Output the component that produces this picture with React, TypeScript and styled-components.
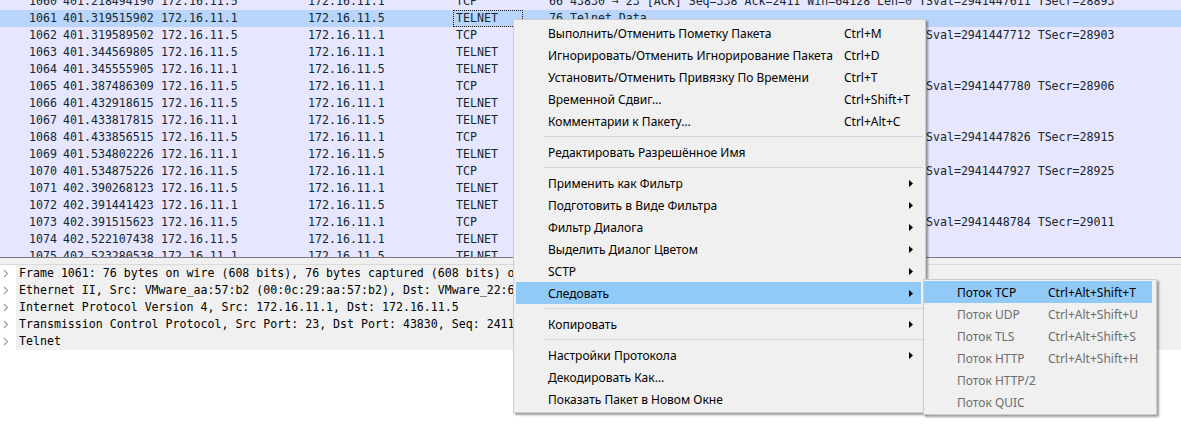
import React from 'react';
import styled, { createGlobalStyle } from 'styled-components';

const Global = createGlobalStyle`
  html, body { margin: 0; padding: 0; background: #ffffff; }
  body { width: 1181px; height: 430px; overflow: hidden; }
  #root { width: 1181px; height: 430px; }
`;

const Window = styled.div`
  position: relative;
  width: 1181px;
  height: 430px;
  overflow: hidden;
  background: #ffffff;
  display: flex;
  flex-direction: column;
  font-family: "DejaVu Sans Mono", "Liberation Mono", monospace;
  font-size: 11.6px;
`;

const PacketList = styled.div`
  flex: none;
  height: 257px;
  overflow: hidden;
  background: #e7e6ff;
  border-bottom: 1px solid #7a7a7a;
`;

const Rows = styled.div`
  display: flex;
  flex-direction: column;
  margin-top: -7px;
`;

const Row = styled.div<{ $selected?: boolean }>`
  display: grid;
  grid-template-columns: 60px 98px 147px 148px 70px 43px 1fr;
  height: 17px;
  line-height: 17px;
  color: #12272e;
  white-space: nowrap;
  background: ${(p) => (p.$selected ? '#bad5fc' : 'transparent')};
`;

const Cell = styled.div<{ $right?: boolean; $focus?: boolean }>`
  padding: 0 3px;
  overflow: hidden;
  text-align: ${(p) => (p.$right ? 'right' : 'left')};
  ${(p) => (p.$focus ? 'outline: 1px dotted #1a1a1a; outline-offset: -1px;' : '')}
`;

const InfoCell = styled.div`
  padding-left: 4px;
  overflow: hidden;
`;

const Splitter = styled.div`
  flex: none;
  height: 6px;
  background: #f0f0f0;
  border-bottom: 1px solid #dadada;
`;

const Details = styled.div`
  flex: 1;
  display: flex;
  flex-direction: column;
  background: #ffffff;
`;

const TreeRow = styled.div`
  display: flex;
  height: 17px;
  line-height: 17px;
  color: #000000;
  white-space: nowrap;
`;

const Expander = styled.div`
  flex: none;
  width: 16px;
  display: flex;
  align-items: center;
  padding-left: 3px;
  box-sizing: border-box;
`;

const TreeText = styled.div`
  flex: 1;
  padding-left: 3px;
  background: #f0f0f0;
  overflow: hidden;
`;

const MenuBox = styled.div`
  position: absolute;
  box-sizing: border-box;
  background: #f0f0f0;
  border: 1px solid #cccccc;
  box-shadow: 2px 2px 2px rgba(0, 0, 0, 0.38);
  font-family: "Noto Sans", "Open Sans", sans-serif;
  font-size: 12px;
  color: #000000;
  display: flex;
  flex-direction: column;
`;

const MainMenu = styled(MenuBox)`
  left: 513px;
  top: 19px;
  width: 413px;
  padding: 2px 4px 2px 2px;
`;

const SubMenu = styled(MenuBox)`
  left: 923px;
  top: 279px;
  width: 234px;
  padding: 1px 4px 1px 0;
`;

const MenuItem = styled.div<{ $active?: boolean; $disabled?: boolean }>`
  display: grid;
  grid-template-columns: 296px 1fr 20px;
  align-items: center;
  height: 22px;
  padding-left: 32px;
  white-space: nowrap;
  background: ${(p) => (p.$active ? '#91c9f7' : 'transparent')};
  color: ${(p) => (p.$disabled ? '#6d6d6d' : '#000000')};
`;

const SubItem = styled(MenuItem)`
  grid-template-columns: 91px 1fr;
  padding-left: 33px;
`;

const Shortcut = styled.span``;

const ArrowCell = styled.span`
  display: flex;
  justify-content: center;
  align-items: center;
`;

const Separator = styled.div`
  height: 1px;
  margin: 4px -2px 4px 27px;
  background: #d5d5d5;
`;

type Pkt = {
  no: number;
  time: string;
  src: string;
  dst: string;
  proto: string;
  len: number;
  info: string;
};

const A = '172.16.11.1';
const B = '172.16.11.5';
const ack = (seq: number, a: number, tsv: string, tse: string) =>
  `43830 → 23 [ACK] Seq=${seq} Ack=${a} Win=64128 Len=0 TSval=${tsv} TSecr=${tse}`;

const packets: Pkt[] = [
  { no: 1060, time: '401.218494190', src: B, dst: A, proto: 'TCP', len: 66, info: ack(338, 2411, '2941447611', '28893') },
  { no: 1061, time: '401.319515902', src: A, dst: B, proto: 'TELNET', len: 76, info: 'Telnet Data ...' },
  { no: 1062, time: '401.319589502', src: B, dst: A, proto: 'TCP', len: 66, info: ack(338, 2421, '2941447712', '28903') },
  { no: 1063, time: '401.344569805', src: B, dst: A, proto: 'TELNET', len: 67, info: 'Telnet Data ...' },
  { no: 1064, time: '401.345555905', src: A, dst: B, proto: 'TELNET', len: 67, info: 'Telnet Data ...' },
  { no: 1065, time: '401.387486309', src: B, dst: A, proto: 'TCP', len: 66, info: ack(339, 2422, '2941447780', '28906') },
  { no: 1066, time: '401.432918615', src: B, dst: A, proto: 'TELNET', len: 67, info: 'Telnet Data ...' },
  { no: 1067, time: '401.433817815', src: A, dst: B, proto: 'TELNET', len: 67, info: 'Telnet Data ...' },
  { no: 1068, time: '401.433856515', src: B, dst: A, proto: 'TCP', len: 66, info: ack(340, 2423, '2941447826', '28915') },
  { no: 1069, time: '401.534802226', src: A, dst: B, proto: 'TELNET', len: 67, info: 'Telnet Data ...' },
  { no: 1070, time: '401.534875226', src: B, dst: A, proto: 'TCP', len: 66, info: ack(340, 2424, '2941447927', '28925') },
  { no: 1071, time: '402.390268123', src: B, dst: A, proto: 'TELNET', len: 67, info: 'Telnet Data ...' },
  { no: 1072, time: '402.391441423', src: A, dst: B, proto: 'TELNET', len: 67, info: 'Telnet Data ...' },
  { no: 1073, time: '402.391515623', src: B, dst: A, proto: 'TCP', len: 66, info: ack(341, 2425, '2941448784', '29011') },
  { no: 1074, time: '402.522107438', src: B, dst: A, proto: 'TELNET', len: 67, info: 'Telnet Data ...' },
  { no: 1075, time: '402.523280538', src: A, dst: B, proto: 'TELNET', len: 67, info: 'Telnet Data ...' },
];

const treeRows = [
  'Frame 1061: 76 bytes on wire (608 bits), 76 bytes captured (608 bits) on interface \\Device\\NPF_{3A2F}, id 0',
  'Ethernet II, Src: VMware_aa:57:b2 (00:0c:29:aa:57:b2), Dst: VMware_22:6f:1c (00:0c:29:22:6f:1c)',
  'Internet Protocol Version 4, Src: 172.16.11.1, Dst: 172.16.11.5',
  'Transmission Control Protocol, Src Port: 23, Dst Port: 43830, Seq: 2411, Ack: 338, Len: 10',
  'Telnet',
];

type Entry =
  | { sep: true }
  | { label: string; shortcut?: string; sub?: boolean; active?: boolean };

const menu: Entry[] = [
  { label: 'Выполнить/Отменить Пометку Пакета', shortcut: 'Ctrl+M' },
  { label: 'Игнорировать/Отменить Игнорирование Пакета', shortcut: 'Ctrl+D' },
  { label: 'Установить/Отменить Привязку По Времени', shortcut: 'Ctrl+T' },
  { label: 'Временной Сдвиг…', shortcut: 'Ctrl+Shift+T' },
  { label: 'Комментарии к Пакету…', shortcut: 'Ctrl+Alt+C' },
  { sep: true },
  { label: 'Редактировать Разрешённое Имя' },
  { sep: true },
  { label: 'Применить как Фильтр', sub: true },
  { label: 'Подготовить в Виде Фильтра', sub: true },
  { label: 'Фильтр Диалога', sub: true },
  { label: 'Выделить Диалог Цветом', sub: true },
  { label: 'SCTP', sub: true },
  { label: 'Следовать', sub: true, active: true },
  { sep: true },
  { label: 'Копировать', sub: true },
  { sep: true },
  { label: 'Настройки Протокола', sub: true },
  { label: 'Декодировать Как…' },
  { label: 'Показать Пакет в Новом Окне' },
];

const follow = [
  { label: 'Поток TCP', shortcut: 'Ctrl+Alt+Shift+T', enabled: true },
  { label: 'Поток UDP', shortcut: 'Ctrl+Alt+Shift+U' },
  { label: 'Поток TLS', shortcut: 'Ctrl+Alt+Shift+S' },
  { label: 'Поток HTTP', shortcut: 'Ctrl+Alt+Shift+H' },
  { label: 'Поток HTTP/2' },
  { label: 'Поток QUIC' },
];

const Chevron = () => (
  <svg width="6" height="9" viewBox="0 0 6 9">
    <path d="M1 1 L4.5 4.5 L1 8" fill="none" stroke="#9a9a9a" strokeWidth="1.1" />
  </svg>
);

const SubArrow = () => (
  <svg width="4" height="7" viewBox="0 0 4 7">
    <polygon points="0,0 4,3.5 0,7" fill="#000" />
  </svg>
);

export default function App() {
  return (
    <>
      <Global />
      <Window>
        <PacketList>
          <Rows>
            {packets.map((p) => {
              const sel = p.no === 1061;
              return (
                <Row key={p.no} $selected={sel}>
                  <Cell $right>{p.no}</Cell>
                  <Cell>{p.time}</Cell>
                  <Cell>{p.src}</Cell>
                  <Cell>{p.dst}</Cell>
                  <Cell $focus={sel}>{p.proto}</Cell>
                  <Cell $right>{p.len}</Cell>
                  <InfoCell>{p.info}</InfoCell>
                </Row>
              );
            })}
          </Rows>
        </PacketList>
        <Splitter />
        <Details>
          {treeRows.map((t) => (
            <TreeRow key={t}>
              <Expander>
                <Chevron />
              </Expander>
              <TreeText>{t}</TreeText>
            </TreeRow>
          ))}
        </Details>

        <MainMenu>
          {menu.map((m, i) =>
            'sep' in m ? (
              <Separator key={i} />
            ) : (
              <MenuItem key={i} $active={m.active}>
                <span>{m.label}</span>
                <Shortcut>{m.shortcut ?? ''}</Shortcut>
                <ArrowCell>{m.sub ? <SubArrow /> : null}</ArrowCell>
              </MenuItem>
            )
          )}
        </MainMenu>

        <SubMenu>
          {follow.map((f) => (
            <SubItem key={f.label} $active={f.enabled} $disabled={!f.enabled}>
              <span>{f.label}</span>
              <Shortcut>{f.shortcut ?? ''}</Shortcut>
            </SubItem>
          ))}
        </SubMenu>
      </Window>
    </>
  );
}
